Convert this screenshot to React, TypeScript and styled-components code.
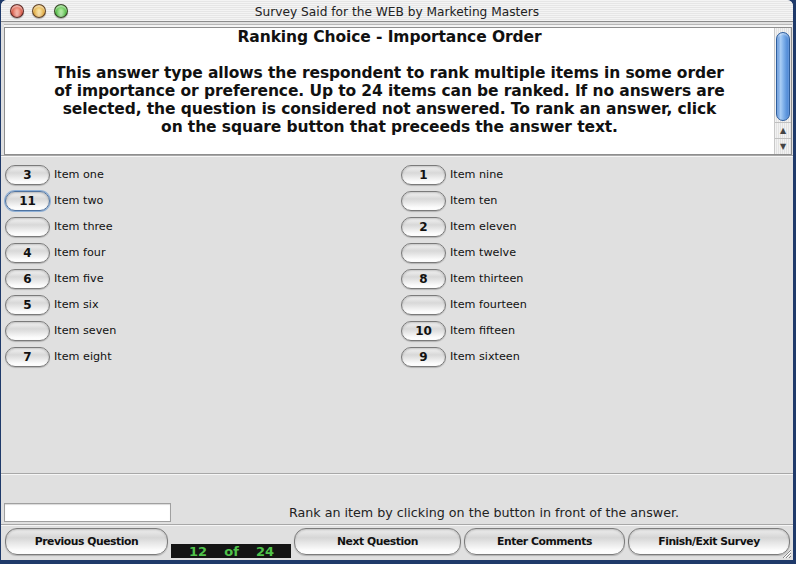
import React from 'react';
import styled, { createGlobalStyle } from 'styled-components';

const Global = createGlobalStyle`
  html, body { margin: 0; padding: 0; background: #1f3a6a; }
  body {
    width: 796px; height: 564px; overflow: hidden;
    font-family: "DejaVu Sans", "Liberation Sans", sans-serif;
    color: #111;
  }
`;

const Window = styled.div`
  position: relative;
  width: 792px;
  height: 560px;
  margin-left: 1px;
  background: #e0e0e0;
  border-radius: 6px 6px 0 0;
  overflow: hidden;
  display: flex;
  flex-direction: column;
`;

const TitleBar = styled.div`
  height: 22px;
  flex: none;
  display: flex;
  align-items: center;
  position: relative;
  background: repeating-linear-gradient(to bottom, #f4f4f4 0 1px, #e6e6e6 1px 2px);
  border-bottom: 1px solid #8c8c8c;
  box-sizing: border-box;
`;

const Lights = styled.div`
  display: flex;
  gap: 8px;
  padding-left: 9px;
  position: absolute;
  left: 0;
  top: 4px;
`;

const Light = styled.span<{ $c: string; $d: string }>`
  width: 14px;
  height: 14px;
  border-radius: 50%;
  box-sizing: border-box;
  border: 1px solid rgba(40, 20, 20, 0.7);
  background: radial-gradient(ellipse at 50% 80%, rgba(255,255,255,0.5) 0, transparent 55%),
    radial-gradient(circle at 50% 45%, ${p => p.$c} 0, ${p => p.$d} 100%);
  box-shadow: inset 0 2px 1px rgba(255,255,255,0.45), 0 1px 1px rgba(0,0,0,0.3);
`;

const Title = styled.div`
  flex: 1;
  text-align: center;
  font-size: 12.2px;
  padding-top: 2px;
  color: #222;
`;

const HeaderBox = styled.div`
  margin: 5px 1px 0 3px;
  height: 128px;
  flex: none;
  display: flex;
  border: 1px solid #8e8e8e;
  box-shadow: 0 -2px 0 #f4f4f4, 0 -3px 0 #b8b8b8;
  background: #fff;
  box-sizing: border-box;
`;

const HeaderText = styled.div`
  flex: 1;
  text-align: center;
  font-weight: bold;
  font-size: 15.5px;
  line-height: 18px;
  padding-top: 0px;
  color: #111;
  letter-spacing: -0.1px;
`;

const HeaderTitle = styled.div`
  margin-bottom: 18px;
`;

const ScrollTrack = styled.div`
  width: 16px;
  flex: none;
  display: flex;
  flex-direction: column;
  border-left: 1px solid #c8c8c8;
  background: repeating-linear-gradient(to right, #f2f2f2 0 1px, #e2e2e2 1px 2px);
`;

const Thumb = styled.div`
  margin: 4px 1px 0 1px;
  height: 87px;
  border-radius: 7px;
  border: 1px solid #2e5e9e;
  background: linear-gradient(to right, #5a8fd6 0%, #a9cdf5 30%, #7fb0ea 55%, #3f7dd0 100%);
  box-shadow: inset 0 1px 2px rgba(255,255,255,0.6);
`;

const Arrows = styled.div`
  margin-top: auto;
  display: flex;
  flex-direction: column;
  border-top: 1px solid #c0c0c0;
`;

const Arrow = styled.div`
  height: 15px;
  display: flex;
  align-items: center;
  justify-content: center;
  font-size: 8px;
  color: #444;
  & + & { border-top: 1px solid #c0c0c0; }
`;

const Separator = styled.div`
  height: 0;
  border-top: 1px solid #a8a8a8;
  border-bottom: 1px solid #f6f6f6;
  flex: none;
`;

const Items = styled.div`
  flex: none;
  height: 316px;
  padding: 8px 0 0 4px;
  display: grid;
  grid-template-columns: 396px 1fr;
  grid-auto-flow: column;
  grid-template-rows: repeat(8, 26px);
  box-sizing: border-box;
`;

const ItemRow = styled.div`
  display: flex;
  align-items: flex-start;
  gap: 4px;
`;

const RankButton = styled.div<{ $focus?: boolean }>`
  width: 45px;
  height: 20px;
  box-sizing: border-box;
  border-radius: 10px;
  border: 1px solid ${p => (p.$focus ? '#4f73a0' : '#7a7a7a')};
  background: linear-gradient(to bottom, #f4f4f4 0%, #d8d8d8 38%, #e4e4e4 55%, #fbfbfb 85%, #ffffff 100%);
  box-shadow: ${p =>
    p.$focus
      ? '0 0 0 1px #8fb0d6, inset 0 1px 2px rgba(0,0,0,0.25)'
      : 'inset 0 1px 2px rgba(0,0,0,0.2), 0 1px 1px rgba(0,0,0,0.2)'};
  display: flex;
  align-items: center;
  justify-content: center;
  font-weight: bold;
  font-size: 12px;
  color: #111;
`;

const ItemLabel = styled.span`
  font-size: 11.2px;
  line-height: 20px;
  color: #111;
`;

const Spacer = styled.div`
  flex: 1;
`;

const StatusRow = styled.div`
  flex: none;
  display: flex;
  align-items: center;
  padding: 0 0 1px 3px;
  height: 23px;
  box-sizing: border-box;
`;

const TextField = styled.div`
  width: 167px;
  height: 19px;
  box-sizing: border-box;
  background: #fff;
  border: 1px solid #a0a0a0;
  box-shadow: inset 0 1px 1px rgba(0,0,0,0.15);
`;

const Hint = styled.div`
  flex: 1;
  text-align: center;
  font-size: 12.7px;
  color: #222;
  padding-left: 4px;
`;

const ButtonRow = styled.div`
  flex: none;
  display: flex;
  align-items: flex-start;
  gap: 3px;
  padding: 2px 0 0 4px;
  height: 34px;
  box-sizing: border-box;
`;

const PushButton = styled.div<{ $w: number }>`
  width: ${p => p.$w}px;
  height: 27px;
  box-sizing: border-box;
  border-radius: 12px;
  border: 1px solid #7c7c7c;
  background: linear-gradient(to bottom, #eeeeee 0%, #d6d6d6 35%, #e6e6e6 55%, #fcfcfc 85%, #ffffff 100%);
  box-shadow: inset 0 1px 2px rgba(0,0,0,0.2), 0 1px 1px rgba(0,0,0,0.2);
  display: flex;
  align-items: center;
  justify-content: center;
  font-weight: bold;
  font-size: 10.8px;
  letter-spacing: -0.45px;
  color: #111;
`;

const Counter = styled.div`
  width: 120px;
  height: 14px;
  margin-top: 16px;
  background: #141414;
  display: flex;
  align-items: center;
  justify-content: space-between;
  padding: 0 17px 0 18px;
  box-sizing: border-box;
  color: #4fc24a;
  font-weight: bold;
  font-size: 13px;
`;

const Grip = styled.svg`
  position: absolute;
  right: 1px;
  bottom: 1px;
`;

const left = [
  ['3', 'Item one'],
  ['11', 'Item two'],
  ['', 'Item three'],
  ['4', 'Item four'],
  ['6', 'Item five'],
  ['5', 'Item six'],
  ['', 'Item seven'],
  ['7', 'Item eight'],
];
const right = [
  ['1', 'Item nine'],
  ['', 'Item ten'],
  ['2', 'Item eleven'],
  ['', 'Item twelve'],
  ['8', 'Item thirteen'],
  ['', 'Item fourteen'],
  ['10', 'Item fifteen'],
  ['9', 'Item sixteen'],
];

export default function App() {
  const items = [...left, ...right];
  return (
    <>
      <Global />
      <Window>
        <TitleBar>
          <Lights>
            <Light $c="#f59a86" $d="#c23a2c" />
            <Light $c="#f8dc86" $d="#d08e22" />
            <Light $c="#9ae884" $d="#2f9e28" />
          </Lights>
          <Title>Survey Said for the WEB by Marketing Masters</Title>
        </TitleBar>
        <HeaderBox>
          <HeaderText>
            <HeaderTitle>Ranking Choice - Importance Order</HeaderTitle>
            This answer type allows the respondent to rank multiple items in some order
            <br />
            of importance or preference. Up to 24 items can be ranked. If no answers are
            <br />
            selected, the question is considered not answered. To rank an answer, click
            <br />
            on the square button that preceeds the answer text.
          </HeaderText>
          <ScrollTrack>
            <Thumb />
            <Arrows>
              <Arrow>▲</Arrow>
              <Arrow>▼</Arrow>
            </Arrows>
          </ScrollTrack>
        </HeaderBox>
        <Separator />
        <Items>
          {items.map(([n, label], i) => (
            <ItemRow key={label}>
              <RankButton $focus={i === 1}>{n}</RankButton>
              <ItemLabel>{label}</ItemLabel>
            </ItemRow>
          ))}
        </Items>
        <Separator />
        <Spacer />
        <StatusRow>
          <TextField />
          <Hint>Rank an item by clicking on the button in front of the answer.</Hint>
        </StatusRow>
        <Separator />
        <ButtonRow>
          <PushButton $w={163}>Previous Question</PushButton>
          <Counter>
            <span>12</span>
            <span>of</span>
            <span>24</span>
          </Counter>
          <PushButton $w={167}>Next Question</PushButton>
          <PushButton $w={161}>Enter Comments</PushButton>
          <PushButton $w={162}>Finish/Exit Survey</PushButton>
        </ButtonRow>
        <Grip width="12" height="12" viewBox="0 0 12 12">
          <path d="M11 3 L3 11 M11 6 L6 11 M11 9 L9 11" stroke="#888" strokeWidth="1" />
          <path d="M11 4 L4 11 M11 7 L7 11" stroke="#fff" strokeWidth="1" />
        </Grip>
      </Window>
    </>
  );
}
